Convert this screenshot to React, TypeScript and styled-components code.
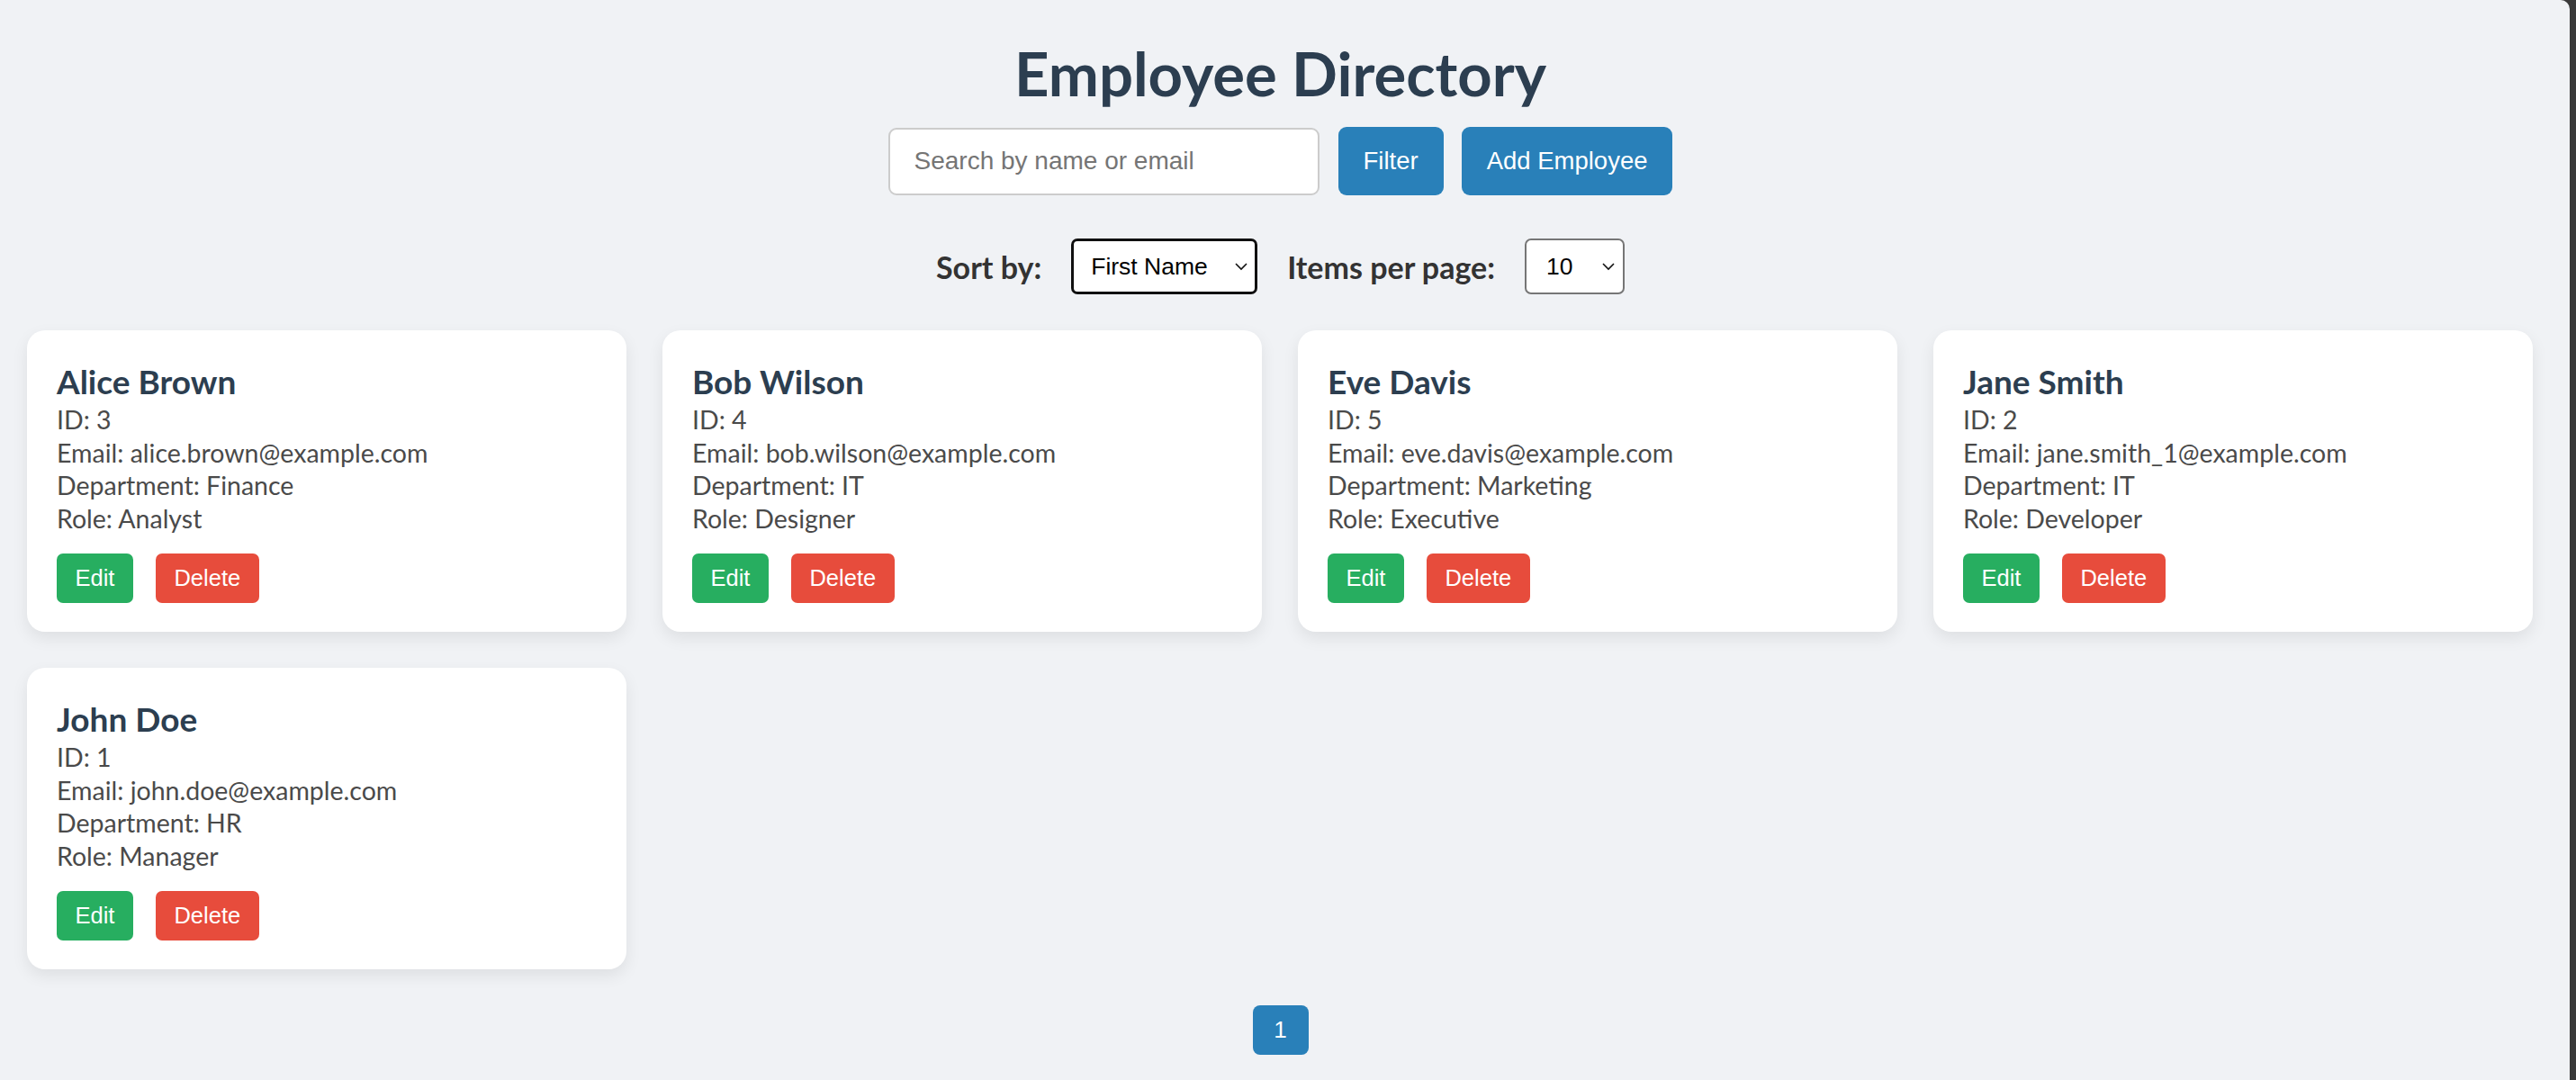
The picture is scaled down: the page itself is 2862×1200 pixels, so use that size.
import React from "react";
import styled, { createGlobalStyle } from "styled-components";

const GlobalStyle = createGlobalStyle`
  html, body {
    margin: 0;
    padding: 0;
    background: #3a3a3a;
  }
  body {
    font-family: "Lato", "Open Sans", sans-serif;
  }
  * { box-sizing: border-box; }
`;

const Frame = styled.div`
  margin-right: 7px;
  min-height: 1200px;
  background: #f0f2f5;
  border-top-right-radius: 10px;
  padding: 41px 40px 40px 30px;
  display: flex;
  flex-direction: column;
  align-items: stretch;
`;

const Title = styled.h1`
  margin: 0;
  text-align: center;
  font-family: "Lato", sans-serif;
  font-weight: 700;
  font-size: 67px;
  line-height: 80px;
  color: #2c3e50;
`;

const Toolbar = styled.div`
  margin-top: 20px;
  display: flex;
  justify-content: center;
  align-items: center;
  gap: 20px;
`;

const SearchInput = styled.input`
  width: 479px;
  height: 75px;
  padding: 0 27px;
  border: 2px solid #cccccc;
  border-radius: 9px;
  background: #ffffff;
  font-family: "Liberation Sans", Arial, sans-serif;
  font-size: 28px;
  color: #333;
  margin-right: 1px;
  outline: none;
  &::placeholder {
    color: #757575;
  }
`;

const PrimaryButton = styled.button`
  height: 76px;
  padding: 0 28px;
  border: none;
  border-radius: 9px;
  background: #2980b9;
  color: #ffffff;
  font-family: "Liberation Sans", Arial, sans-serif;
  font-size: 27.5px;
  cursor: pointer;
`;

const SortRow = styled.div`
  margin-top: 48px;
  display: flex;
  justify-content: center;
  align-items: center;
  gap: 33px;
`;

const SortLabel = styled.label`
  font-family: "Lato", sans-serif;
  font-weight: 700;
  font-size: 34px;
  color: #333333;
`;

const SelectWrap = styled.div<{ $width: number }>`
  position: relative;
  width: ${(p) => p.$width}px;
  height: 62px;
`;

const Select = styled.select<{ $focused?: boolean }>`
  appearance: none;
  -webkit-appearance: none;
  width: 100%;
  height: 100%;
  padding: 0 0 0 ${(p) => (p.$focused ? 19 : 22)}px;
  border: ${(p) => (p.$focused ? "3.5px solid #101010" : "2px solid #767676")};
  border-radius: 7px;
  background: #ffffff;
  font-family: "Liberation Sans", Arial, sans-serif;
  font-size: 26.5px;
  color: #000;
  outline: none;
`;

const Chevron = styled.svg`
  position: absolute;
  right: 10px;
  top: 50%;
  transform: translateY(-50%);
  width: 16px;
  height: 10px;
  pointer-events: none;
`;

const Grid = styled.div`
  margin-top: 40px;
  display: grid;
  grid-template-columns: repeat(4, 666px);
  gap: 40px;
`;

const Card = styled.div`
  background: #ffffff;
  border-radius: 20px;
  padding: 33px 33px 32px 33px;
  box-shadow: 0 7px 18px rgba(0, 0, 0, 0.08);
  display: flex;
  flex-direction: column;
`;

const Name = styled.h3`
  margin: 0;
  font-family: "Lato", sans-serif;
  font-weight: 700;
  font-size: 37px;
  line-height: 48px;
  color: #2c3e50;
`;

const Info = styled.p`
  margin: 0;
  font-family: "Lato", sans-serif;
  font-weight: 400;
  font-size: 28.5px;
  line-height: 36.7px;
  color: #4a4a4a;
`;

const Actions = styled.div`
  margin-top: 20px;
  display: flex;
  gap: 25px;
`;

const ActionButton = styled.button<{ $variant: "edit" | "delete" }>`
  height: 55px;
  padding: 0 20.5px;
  border: none;
  border-radius: 7px;
  background: ${(p) => (p.$variant === "edit" ? "#27ae60" : "#e74c3c")};
  color: #ffffff;
  font-family: "Liberation Sans", Arial, sans-serif;
  font-size: 25.5px;
  cursor: pointer;
`;

const Pagination = styled.div`
  margin-top: 40px;
  display: flex;
  justify-content: center;
`;

const PageButton = styled.button`
  width: 62px;
  height: 55px;
  border: none;
  border-radius: 8px;
  background: #2980b9;
  color: #ffffff;
  font-family: "Liberation Sans", Arial, sans-serif;
  font-size: 26px;
  padding: 0;
`;

type Employee = {
  id: number;
  name: string;
  email: string;
  department: string;
  role: string;
};

const employees: Employee[] = [
  { id: 3, name: "Alice Brown", email: "alice.brown@example.com", department: "Finance", role: "Analyst" },
  { id: 4, name: "Bob Wilson", email: "bob.wilson@example.com", department: "IT", role: "Designer" },
  { id: 5, name: "Eve Davis", email: "eve.davis@example.com", department: "Marketing", role: "Executive" },
  { id: 2, name: "Jane Smith", email: "jane.smith_1@example.com", department: "IT", role: "Developer" },
  { id: 1, name: "John Doe", email: "john.doe@example.com", department: "HR", role: "Manager" },
];

const ChevronIcon = () => (
  <Chevron viewBox="0 0 16 10">
    <path d="M2 2 L8 8 L14 2" fill="none" stroke="#111" strokeWidth="1.6" />
  </Chevron>
);

export default function App() {
  return (
    <>
      <GlobalStyle />
      <Frame>
        <Title>Employee Directory</Title>
        <Toolbar>
          <SearchInput placeholder="Search by name or email" />
          <PrimaryButton>Filter</PrimaryButton>
          <PrimaryButton>Add Employee</PrimaryButton>
        </Toolbar>
        <SortRow>
          <SortLabel>Sort by:</SortLabel>
          <SelectWrap $width={207}>
            <Select $focused defaultValue="firstName">
              <option value="firstName">First Name</option>
              <option value="lastName">Last Name</option>
            </Select>
            <ChevronIcon />
          </SelectWrap>
          <SortLabel>Items per page:</SortLabel>
          <SelectWrap $width={111}>
            <Select defaultValue="10">
              <option value="5">5</option>
              <option value="10">10</option>
              <option value="20">20</option>
            </Select>
            <ChevronIcon />
          </SelectWrap>
        </SortRow>
        <Grid>
          {employees.map((e) => (
            <Card key={e.id}>
              <Name>{e.name}</Name>
              <Info>ID: {e.id}</Info>
              <Info>Email: {e.email}</Info>
              <Info>Department: {e.department}</Info>
              <Info>Role: {e.role}</Info>
              <Actions>
                <ActionButton $variant="edit">Edit</ActionButton>
                <ActionButton $variant="delete">Delete</ActionButton>
              </Actions>
            </Card>
          ))}
        </Grid>
        <Pagination>
          <PageButton>1</PageButton>
        </Pagination>
      </Frame>
    </>
  );
}
